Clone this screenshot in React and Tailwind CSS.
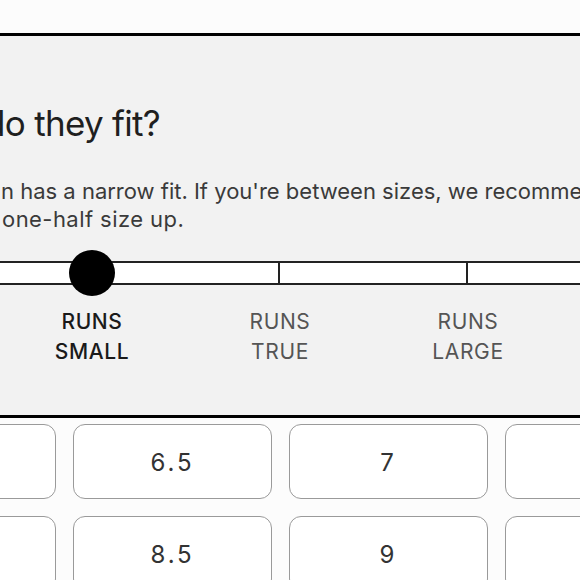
import React from "react";

const segments = [0, 1, 2, 3];

const labels = [
  { top: "RUNS", bottom: "SMALL", active: true },
  { top: "RUNS", bottom: "TRUE", active: false },
  { top: "RUNS", bottom: "LARGE", active: false },
];

const sizes = ["6", "6.5", "7", "7.5", "8", "8.5", "9", "9.5"];

const FitSlider = () => {
  return (
    <div className="relative mt-[28px] h-[24px] border-y-2 border-[#222] bg-white">
      <div className="ml-[-96px] flex h-full">
        {segments.map((s) => (
          <div key={s} className="h-full w-[188px] shrink-0 border-r-2 border-[#222]" />
        ))}
      </div>
      <div className="absolute left-[69px] top-[-13px] h-[46px] w-[46px] rounded-full bg-black" />
    </div>
  );
};

const App = () => {
  return (
    <div className="h-[580px] w-[580px] overflow-hidden bg-[#fcfcfc] font-['Inter',sans-serif]">
      <div className="h-[33px]" />

      <section className="h-[385px] border-y-[3px] border-black bg-[#f2f2f2]">
        <h2 className="ml-[-16px] mt-[67px] whitespace-nowrap text-[35px] leading-[40px] tracking-[-0.02em] text-[#1f1f1f]">
          do they fit?
        </h2>
        <p className="ml-[1px] mt-[34px] whitespace-nowrap text-[22px] leading-[28px] text-[#3a3a3a]">
          n has a narrow fit. If you're between sizes, we recommend going
          <br />
          <span className="ml-[1px] tracking-[0.02em]">one-half size up.</span>
        </p>

        <FitSlider />

        <div className="ml-[-2px] mt-[22px] flex">
          {labels.map((l) => (
            <div
              key={l.bottom}
              className={
                l.active
                  ? "w-[188px] shrink-0 text-center text-[21px] font-medium leading-[30px] tracking-[0.03em] text-[#1a1a1a]"
                  : "w-[188px] shrink-0 text-center text-[21px] leading-[30px] tracking-[0.03em] text-[#555]"
              }
            >
              {l.top}
              <br />
              {l.bottom}
            </div>
          ))}
        </div>
      </section>

      <div className="ml-[-143px] grid grid-cols-[repeat(4,199px)] gap-[17px] pt-[6px]">
        {sizes.map((s) => (
          <button
            key={s}
            className="flex h-[75px] items-center justify-center rounded-[12px] border border-[#9a9a9a] bg-white pt-[2px] text-[24px] tracking-[0.12em] text-[#333]"
          >
            {s}
          </button>
        ))}
      </div>
    </div>
  );
};

export default App;
